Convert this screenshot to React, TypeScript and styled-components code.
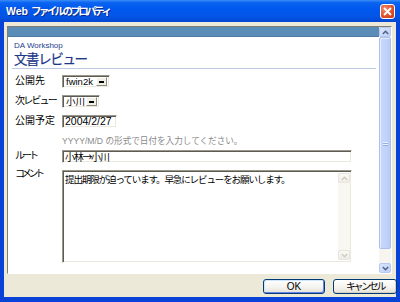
import React from "react";
import styled, { createGlobalStyle } from "styled-components";

const FONT = `"Liberation Sans", "Noto Sans CJK JP", sans-serif`;

const Global = createGlobalStyle`
  html, body { margin: 0; padding: 0; background: #ffffff; }
  body { width: 400px; height: 302px; overflow: hidden; font-family: ${FONT}; }
  * { box-sizing: border-box; }
`;

/* Japanese text run with tightened spacing (stands in for proportional kana) */
const Narrow = styled.span<{ $ls: number }>`
  letter-spacing: ${(p) => p.$ls}px;
`;

const ArrowGlyph = styled.span`
  font-family: "Noto Sans CJK JP", sans-serif;
  letter-spacing: -1.5px;
`;

const Window = styled.div`
  width: 400px;
  height: 302px;
  display: flex;
  flex-direction: column;
`;

const TitleBar = styled.div`
  height: 22px;
  flex: none;
  display: flex;
  align-items: center;
  justify-content: space-between;
  padding: 0 5px 0 6px;
  background: linear-gradient(
    #3b8cf8 0%,
    #0a64f0 12%,
    #0058ee 40%,
    #0455e6 75%,
    #0447d2 100%
  );
`;

const TitleText = styled.span`
  color: #ffffff;
  font-weight: bold;
  font-size: 10.5px;
  text-shadow: 1px 1px 0 #0a2a8a;
  line-height: 22px;
  white-space: nowrap;
`;

const CloseButton = styled.div`
  width: 15px;
  height: 15px;
  border: 1px solid #ffffff;
  border-radius: 3px;
  background: radial-gradient(circle at 30% 30%, #f08a6c 0%, #e0532c 55%, #c23a17 100%);
  display: flex;
  align-items: center;
  justify-content: center;
`;

const Frame = styled.div`
  flex: 1;
  display: flex;
  flex-direction: column;
  min-height: 0;
  background: #ece9d8;
  border-style: solid;
  border-color: #0842d6;
  border-width: 0 4px 5px 4px;
`;

const Body = styled.div`
  padding: 4px 4px 0 3px;
`;

const Panel = styled.div`
  height: 248px;
  display: flex;
  border-style: solid;
  border-width: 1px;
  border-color: #7f7d74 #ffffff #ffffff #7f7d74;
  background: #ffffff;
`;

const Content = styled.div`
  flex: 1;
  min-width: 0;
  display: flex;
  flex-direction: column;
`;

const HeaderStrip = styled.div`
  height: 10px;
  background: #5a8cb8;
  border-bottom: 1px solid #4d7ba6;
`;

const Intro = styled.div`
  padding: 4px 3px 0 4px;
`;

const Brand = styled.div`
  padding-left: 2px;
  font-size: 8px;
  line-height: 9px;
  height: 10px;
  color: #23408e;
  font-family: "Liberation Sans", sans-serif;
`;

const Heading = styled.div`
  padding-left: 2px;
  font-size: 13.5px;
  line-height: 15px;
  height: 15px;
  letter-spacing: -1.4px;
  color: #1b3889;
  font-family: "Noto Sans CJK JP", sans-serif;
  -webkit-text-stroke: 0.2px #1b3889;
`;

const Rule = styled.div`
  margin-top: 2px;
  height: 1px;
  background: #bccbe2;
`;

const Form = styled.div`
  margin-top: 6px;
  padding-left: 7px;
  display: grid;
  grid-template-columns: 47px auto;
  row-gap: 7px;
  align-items: start;
`;

const Label = styled.div<{ $shift?: number }>`
  font-size: 10px;
  line-height: 13px;
  color: #000000;
  margin-top: ${(p) => p.$shift ?? -1}px;
  white-space: nowrap;
`;

const Empty = styled.div``;

const inset = `
  border-style: solid;
  border-width: 1px;
  border-color: #9a978c #ffffff #ffffff #9a978c;
  box-shadow: inset 1px 1px 0 #5e5b52, inset -1px -1px 0 #ebe8dd;
  background: #ffffff;
`;

const SelectBox = styled.div<{ $w: number }>`
  ${inset}
  width: ${(p) => p.$w}px;
  height: 13px;
  display: flex;
  align-items: center;
  padding: 2px;
`;

const SelectValue = styled.span`
  flex: 1;
  font-size: 9.5px;
  line-height: 9px;
  padding-left: 1px;
  white-space: nowrap;
  overflow: hidden;
`;

const DropButton = styled.div`
  width: 11px;
  height: 9px;
  flex: none;
  background: #f1efe6;
  border-style: solid;
  border-width: 1px;
  border-color: #ffffff #8e8b80 #8e8b80 #ffffff;
  display: flex;
  align-items: center;
  justify-content: center;
`;

const Caret = styled.div`
  width: 5px;
  height: 2px;
  margin-top: 1px;
  background: #000000;
`;

const TextBox = styled.div<{ $w: number; $size?: number }>`
  ${inset}
  width: ${(p) => p.$w}px;
  height: 13px;
  padding: 0 2px;
  font-size: ${(p) => p.$size ?? 10}px;
  line-height: 11px;
  white-space: nowrap;
  overflow: hidden;
`;

const Hint = styled.div`
  height: 8px;
  line-height: 12px;
  font-size: 8.6px;
  color: #8a8a8a;
  white-space: nowrap;
`;

const TextArea = styled.div`
  ${inset}
  width: 290px;
  height: 93px;
  display: flex;
  padding: 2px 1px 2px 2px;
`;

const AreaText = styled.div`
  flex: 1;
  font-size: 9.5px;
  letter-spacing: -1.1px;
  line-height: 11px;
  padding-top: 1px;
`;

const ScrollBar = styled.div<{ $disabled?: boolean }>`
  width: 12px;
  flex: none;
  display: flex;
  flex-direction: column;
  background: ${(p) => (p.$disabled ? "#f8f7f2" : "#f6f5f0")};
`;

const ArrowButton = styled.div<{ $disabled?: boolean }>`
  height: 10px;
  flex: none;
  border-radius: 2px;
  border: 1px solid ${(p) => (p.$disabled ? "#e7e5dc" : "#b7c9f1")};
  background: ${(p) =>
    p.$disabled
      ? "linear-gradient(#faf9f5, #eeede6)"
      : "linear-gradient(135deg, #dbe6fd, #bcd0f9)"};
  display: flex;
  align-items: center;
  justify-content: center;
`;

const Track = styled.div`
  flex: 1;
  display: flex;
  flex-direction: column;
`;

const Thumb = styled.div<{ $h: number }>`
  height: ${(p) => p.$h}px;
  border: 1px solid #a9bff0;
  border-radius: 2px;
  background: linear-gradient(90deg, #c9d8fb 0%, #c3d4fa 50%, #b9ccf6 100%);
  box-shadow: inset 1px 1px 0 #e4ecfd;
  display: flex;
  flex-direction: column;
  align-items: center;
  justify-content: center;
  gap: 1px;
`;

const Grip = styled.div`
  width: 5px;
  height: 1px;
  background: #eef3fe;
  box-shadow: 0 1px 0 #8faee9;
`;

const Footer = styled.div`
  height: 23px;
  display: flex;
  align-items: center;
  justify-content: flex-end;
  gap: 8px;
  padding: 1px 0 0 0;
  margin-right: -1px;
`;

const Button = styled.div<{ $w: number; $default?: boolean }>`
  width: ${(p) => p.$w}px;
  height: 15px;
  border: 1px solid #003c74;
  border-radius: 3px;
  background: linear-gradient(#ffffff 0%, #f3f2ed 60%, #e3e0d6 100%);
  box-shadow: ${(p) =>
    p.$default
      ? "inset 1px 1px 0 #cee7ff, inset -1px -1px 0 #6982ee"
      : "inset -1px -1px 0 #d6d0c5"};
  font-size: 10px;
  line-height: 13px;
  text-align: center;
  color: #000000;
  white-space: nowrap;
`;

const Chevron: React.FC<{ dir: "up" | "down"; color: string }> = ({ dir, color }) => (
  <svg width="7" height="5" viewBox="0 0 7 5">
    <polyline
      points={dir === "up" ? "0.8,4 3.5,1.3 6.2,4" : "0.8,1 3.5,3.7 6.2,1"}
      fill="none"
      stroke={color}
      strokeWidth="1.5"
    />
  </svg>
);

const Select: React.FC<{ w: number; value: string }> = ({ w, value }) => (
  <SelectBox $w={w}>
    <SelectValue>{value}</SelectValue>
    <DropButton>
      <Caret />
    </DropButton>
  </SelectBox>
);

export default function App() {
  return (
    <>
      <Global />
      <Window>
        <TitleBar>
          <TitleText>
            Web <Narrow $ls={-2.6}>ファイルのプロパティ</Narrow>
          </TitleText>
          <CloseButton>
            <svg width="9" height="9" viewBox="0 0 9 9">
              <path d="M1 1 L8 8 M8 1 L1 8" stroke="#ffffff" strokeWidth="1.8" />
            </svg>
          </CloseButton>
        </TitleBar>
        <Frame>
          <Body>
            <Panel>
              <Content>
                <HeaderStrip />
                <Intro>
                  <Brand>DA Workshop</Brand>
                  <Heading>文書レビュー</Heading>
                  <Rule />
                </Intro>
                <Form>
                  <Label>公開先</Label>
                  <Select w={48} value="fwin2k" />
                  <Label>
                    <Narrow $ls={-1.8}>次レビュー</Narrow>
                  </Label>
                  <Select w={38} value="小川" />
                  <Label>公開予定</Label>
                  <TextBox $w={55} $size={10.5}>2004/2/27</TextBox>
                  <Empty />
                  <Hint>YYYY/M/D の形式で日付を入力してください。</Hint>
                  <Label>
                    <Narrow $ls={-3}>ルート</Narrow>
                  </Label>
                  <TextBox $w={290}>
                    <Narrow $ls={-1.2}>
                      小林<ArrowGlyph>→</ArrowGlyph>小川
                    </Narrow>
                  </TextBox>
                  <Label $shift={-3}>
                    <Narrow $ls={-3.3}>コメント</Narrow>
                  </Label>
                  <TextArea>
                    <AreaText>提出期限が迫っています。早急にレビューをお願いします。</AreaText>
                    <ScrollBar $disabled>
                      <ArrowButton $disabled>
                        <Chevron dir="up" color="#cfcdc2" />
                      </ArrowButton>
                      <Track />
                      <ArrowButton $disabled>
                        <Chevron dir="down" color="#cfcdc2" />
                      </ArrowButton>
                    </ScrollBar>
                  </TextArea>
                </Form>
              </Content>
              <ScrollBar>
                <ArrowButton>
                  <Chevron dir="up" color="#4d6185" />
                </ArrowButton>
                <Track>
                  <Thumb $h={212}>
                    <Grip />
                    <Grip />
                  </Thumb>
                </Track>
                <ArrowButton>
                  <Chevron dir="down" color="#4d6185" />
                </ArrowButton>
              </ScrollBar>
            </Panel>
          </Body>
          <Footer>
            <Button $w={62} $default>OK</Button>
            <Button $w={64}>
              <Narrow $ls={-2.4}>キャンセル</Narrow>
            </Button>
          </Footer>
        </Frame>
      </Window>
    </>
  );
}
